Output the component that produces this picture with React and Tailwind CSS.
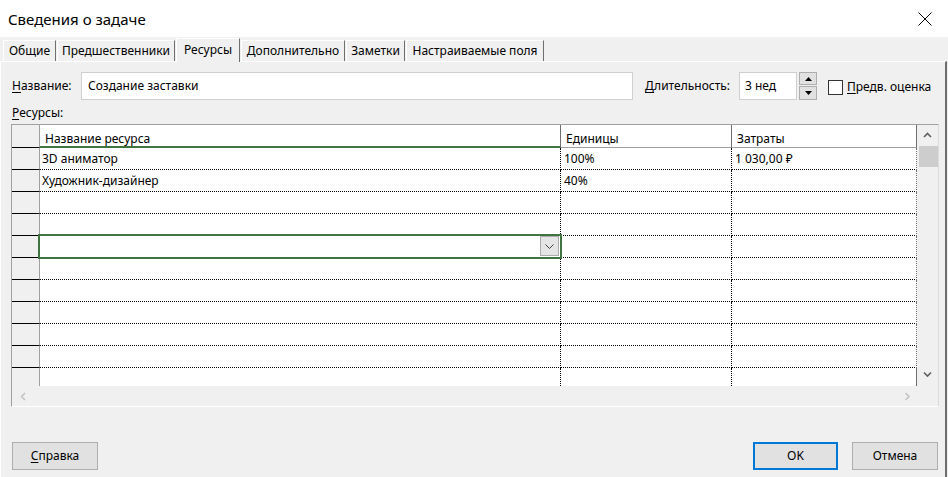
import React from "react";

const rows = [
  { name: "3D аниматор", units: "100%", cost: "1 030,00 ₽" },
  { name: "Художник-дизайнер", units: "40%", cost: "" },
  { name: "", units: "", cost: "" },
  { name: "", units: "", cost: "" },
  { name: "", units: "", cost: "" },
  { name: "", units: "", cost: "" },
  { name: "", units: "", cost: "" },
  { name: "", units: "", cost: "" },
  { name: "", units: "", cost: "" },
  { name: "", units: "", cost: "" },
];

function Chevron({ dir, color, className }) {
  const d =
    dir === "up"
      ? "M1 5 L4.5 1.5 L8 5"
      : dir === "down"
      ? "M1 1.5 L4.5 5 L8 1.5"
      : dir === "left"
      ? "M5 1 L1.5 4.5 L5 8"
      : "M1.5 1 L5 4.5 L1.5 8";
  const w = dir === "up" || dir === "down" ? 9 : 7;
  const h = dir === "up" || dir === "down" ? 7 : 9;
  return (
    <svg width={w} height={h} viewBox={`0 0 ${w} ${h}`} className={className}>
      <path d={d} fill="none" stroke={color} strokeWidth="1.6" />
    </svg>
  );
}

function Tab({ label, w, active }) {
  return (
    <div
      className={
        "flex items-center justify-center border-l border-t border-r border-l-white border-t-white border-r-[#6e6e6e] " +
        (active ? "h-[24px] mb-[-1px] bg-[#f0f0f0] z-10 pb-[2px]" : "h-[21px] bg-[#f0f0f0]")
      }
      style={{ width: w }}
    >
      {label}
    </div>
  );
}

export default function App() {
  return (
    <div className="w-[948px] h-[477px] bg-[#f0f0f0] overflow-hidden text-[12px] leading-[16px] text-black font-['Noto_Sans',sans-serif]">
      {/* Title bar */}
      <div className="h-[37px] bg-white flex items-center justify-between pl-[8px] pr-[16px]">
        <div className="text-[15px] leading-[20px]">Сведения о задаче</div>
        <svg width="14" height="14" viewBox="0 0 14 14" className="mt-[1px]">
          <path d="M0.5 0.5 L13.5 13.5 M13.5 0.5 L0.5 13.5" stroke="#000" strokeWidth="1" fill="none" />
        </svg>
      </div>

      {/* Tabs */}
      <div className="h-[24px] flex items-end pl-[3px] gap-[1px]">
        <Tab label="Общие" w={53} />
        <Tab label="Предшественники" w={118} />
        <Tab label="Ресурсы" w={64} active />
        <Tab label="Дополнительно" w={104} />
        <Tab label="Заметки" w={59} />
        <Tab label="Настраиваемые поля" w={138} />
      </div>

      {/* Panel */}
      <div className="w-[947px] h-[416px] border-t border-t-white border-l border-l-white border-r-2 border-r-[#6e6e6e] pl-[10px]">
        {/* Name row */}
        <div className="flex items-center h-[28px] mt-[10px] pl-[1px]">
          <div className="w-[69px]">
            <span className="underline underline-offset-2">Н</span>азвание:
          </div>
          <div className="w-[552px] h-[28px] bg-white border border-[#cfcfcf] flex items-center pl-[6px]">
            Создание заставки
          </div>
          <div className="w-[94px] ml-[12px]">
            <span className="underline underline-offset-2">Д</span>лительность:
          </div>
          <div className="w-[58px] h-[28px] bg-white border border-[#cfcfcf] flex items-center pl-[5px]">
            3 нед
          </div>
          <div className="ml-[2px] w-[18px] h-[28px] flex flex-col gap-[1px]">
            <div className="h-[13px] bg-[#e1e1e1] border border-[#adadad] flex items-center justify-center">
              <svg width="7" height="4" viewBox="0 0 7 4">
                <path d="M0 4 L3.5 0 L7 4 Z" fill="#000" />
              </svg>
            </div>
            <div className="h-[14px] bg-[#e1e1e1] border border-[#adadad] flex items-center justify-center">
              <svg width="7" height="4" viewBox="0 0 7 4">
                <path d="M0 0 L3.5 4 L7 0 Z" fill="#000" />
              </svg>
            </div>
          </div>
          <div className="ml-[11px] w-[15px] h-[15px] bg-white border border-[#333333] mt-[2px]" />
          <div className="ml-[4px] mt-[1px]">
            <span className="underline underline-offset-2">П</span>редв. оценка
          </div>
        </div>

        {/* Resources label */}
        <div className="mt-[5px] h-[16px] pl-[1px]">
          <span className="underline underline-offset-2">Р</span>есурсы:
        </div>

        {/* Grid */}
        <div className="relative mt-[3px] w-[928px] border-l border-t border-l-[#a0a0a0] border-t-[#a0a0a0] border-r border-b border-r-[#dcdcdc] border-b-white flex">
          <div className="w-[905px] flex flex-col">
            {/* Header */}
            <div className="flex h-[23px]">
              <div className="w-[28px] bg-[#f0f0f0] border-r border-r-[#a0a0a0] border-b border-b-black" />
              <div className="w-[521px] bg-white border-r border-r-[#6e6e6e] border-b-2 border-b-[#3f7440] pl-[5px] pt-[6px]">
                Название ресурса
              </div>
              <div className="w-[171px] bg-white border-r border-r-[#6e6e6e] border-b border-b-[#a0a0a0] pl-[5px] pt-[6px]">
                Единицы
              </div>
              <div className="w-[185px] bg-white border-r border-r-[#6e6e6e] border-b border-b-[#a0a0a0] pl-[5px] pt-[6px]">
                Затраты
              </div>
            </div>
            {/* Body */}
            <div className="h-[238px] flex flex-col overflow-hidden">
              {rows.map((r, i) => (
                <div key={i} className="flex h-[22px] shrink-0">
                  <div className="w-[28px] bg-[#f0f0f0] border-r border-r-[#a0a0a0] border-b border-b-black" />
                  <div className="w-[521px] bg-white border-r border-b border-dotted border-black pl-[2px] leading-[21px]">
                    {r.name}
                  </div>
                  <div className="w-[171px] bg-white border-r border-b border-dotted border-black pl-[3px] leading-[21px]">
                    {r.units}
                  </div>
                  <div className="w-[185px] bg-white border-b border-dotted border-b-black border-r border-r-[#6e6e6e] pl-[3px] leading-[21px]">
                    {r.cost}
                  </div>
                </div>
              ))}
              <div className="flex h-[18px] shrink-0">
                <div className="w-[28px] bg-[#f0f0f0] border-r border-r-[#a0a0a0]" />
                <div className="w-[521px] bg-white border-r border-dotted border-black" />
                <div className="w-[171px] bg-white border-r border-dotted border-black" />
                <div className="w-[185px] bg-white border-r border-r-[#6e6e6e]" />
              </div>
            </div>
            {/* Horizontal scrollbar */}
            <div className="h-[20px] bg-[#f0f0f0] flex items-center justify-between pl-[8px] pr-[6px]">
              <Chevron dir="left" color="#c4c4c4" />
              <Chevron dir="right" color="#c4c4c4" />
            </div>
          </div>
          {/* Vertical scrollbar */}
          <div className="w-[22px] bg-[#f0f0f0] flex flex-col items-center pt-[7px]">
            <Chevron dir="up" color="#606060" />
            <div className="mt-[7px] w-[19px] h-[21px] bg-[#cdcdcd] ml-[1px]" />
            <div className="mt-[204px] flex">
              <Chevron dir="down" color="#606060" />
            </div>
          </div>

          {/* Selected cell */}
          <div className="absolute left-[26px] top-[109px] w-[524px] h-[25px] border-2 border-[#3f7440]">
            <div className="absolute left-[500px] top-[0px] w-[19px] h-[20px] bg-[#e5e5e5] border border-[#acacac] flex items-center justify-center">
              <svg width="9" height="5" viewBox="0 0 9 5">
                <path d="M0.5 0.5 L4.5 4.5 L8.5 0.5" fill="none" stroke="#404040" strokeWidth="1" />
              </svg>
            </div>
          </div>
        </div>

        {/* Buttons */}
        <div className="flex mt-[35px] h-[28px] pr-[7px]">
          <div className="w-[86px] h-[28px] bg-[#e1e1e1] border border-[#adadad] flex items-center justify-center ml-[1px]">
            <span>
              <span className="underline underline-offset-2">С</span>правка
            </span>
          </div>
          <div className="flex-1" />
          <div className="w-[85px] h-[28px] bg-[#e1e1e1] border-2 border-[#0078d7] flex items-center justify-center">
            OK
          </div>
          <div className="w-[86px] h-[28px] bg-[#e1e1e1] border border-[#adadad] flex items-center justify-center ml-[14px]">
            Отмена
          </div>
        </div>
      </div>
    </div>
  );
}
